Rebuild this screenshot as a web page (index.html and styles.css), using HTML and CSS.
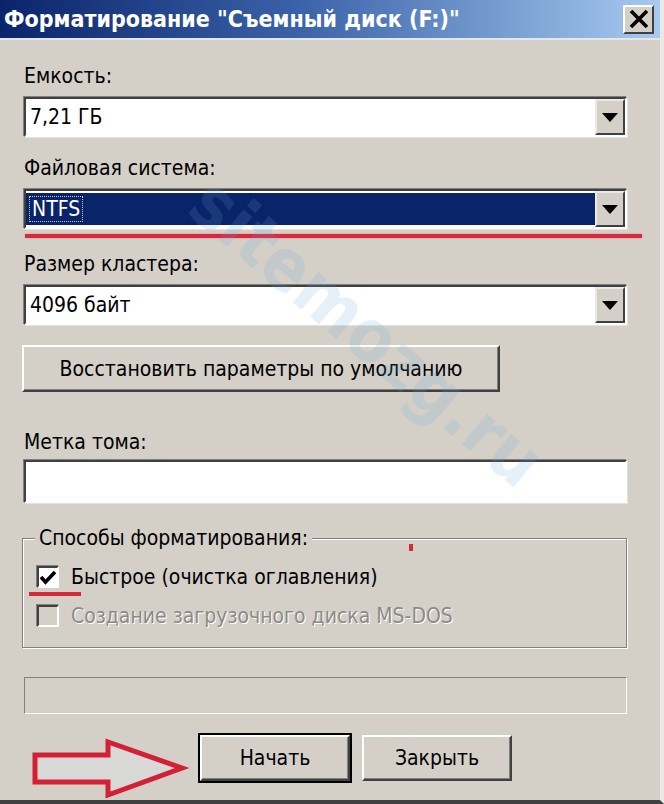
FILE: index.html
```html
<!DOCTYPE html>
<html lang="ru">
<head>
  <meta charset="UTF-8">
  <title>Форматирование</title>
  <link rel="stylesheet" href="styles.css">
</head>
<body>
  <div class="window">
    <div class="titlebar">
      <span class="title">Форматирование "Съемный диск (F:)"</span>
      <span class="close-btn">
        <svg width="22" height="20" viewBox="0 0 22 20"><path d="M3 2 L19 18 M19 2 L3 18" stroke="#000" stroke-width="3.6"/></svg>
      </span>
    </div>

    <div class="content">
      <div class="label first">Емкость:</div>
      <div class="combo">
        <span class="combo-value">7,21 ГБ</span>
        <span class="combo-btn"><span class="arrow-down"></span></span>
      </div>

      <div class="label">Файловая система:</div>
      <div class="combo selected">
        <span class="combo-value"><span class="focus">NTFS</span></span>
        <span class="combo-btn"><span class="arrow-down"></span></span>
      </div>
      <div class="red-line"></div>

      <div class="label after-line">Размер кластера:</div>
      <div class="combo">
        <span class="combo-value">4096 байт</span>
        <span class="combo-btn"><span class="arrow-down"></span></span>
      </div>

      <div class="restore-row">
        <span class="btn restore">Восстановить параметры по умолчанию</span>
      </div>

      <div class="label volume">Метка тома:</div>
      <div class="textbox"></div>

      <div class="group">
        <span class="legend">Способы форматирования:</span>
        <div class="check-row">
          <span class="checkbox"><svg width="18" height="16" viewBox="0 0 18 16"><path d="M2 8 L6.5 13 L16 3" fill="none" stroke="#000" stroke-width="3.6"/></svg></span>
          <span>Быстрое (очистка оглавления)</span>
          <span class="red-dash"></span>
        </div>
        <div class="check-row disabled">
          <span class="checkbox off"></span>
          <span>Создание загрузочного диска MS-DOS</span>
        </div>
      </div>

      <div class="progress"></div>

      <div class="actions">
        <span class="btn default">Начать</span>
        <span class="btn">Закрыть</span>
      </div>
    </div>

    <span class="red-dot"></span>
    <span class="watermark">sitemozg.ru</span>
    <svg class="red-arrow" width="170" height="70" viewBox="0 0 170 70">
      <path d="M5 17 L78 17 L78 4 L152 30 L78 57 L78 44 L5 44 Z" fill="rgba(220,225,230,0.5)" stroke="#d42035" stroke-width="5" stroke-linejoin="miter"/>
    </svg>
  </div>
</body>
</html>
```

FILE: styles.css
```css
body {
  margin: 0;
  background: #d4d0c8;
  font-family: "DejaVu Sans Condensed", "DejaVu Sans", sans-serif;
  font-size: 21px;
  color: #000;
}

.window {
  position: relative;
  width: 664px;
  height: 804px;
  box-sizing: border-box;
  background: #d4d0c8;
  border-right: 4px solid #ece9e4;
  border-bottom: 4px solid #404040;
  overflow: hidden;
}

.titlebar {
  height: 38px;
  display: flex;
  align-items: center;
  justify-content: space-between;
  padding: 0 6px 0 4px;
  background: linear-gradient(to right, #0a246a 0%, #3a62a8 45%, #a6caf0 100%);
  border-bottom: 2px solid #e6e6e6;
}

.title {
  color: #fff;
  font-weight: bold;
  font-size: 23px;
}

.close-btn {
  width: 31px;
  height: 29px;
  display: flex;
  align-items: center;
  justify-content: center;
  box-sizing: border-box;
  background: #d4d0c8;
  border: 2px solid;
  border-color: #fff #404040 #404040 #fff;
}

.content {
  display: flex;
  flex-direction: column;
  padding: 0 33px 0 24px;
}

.label {
  line-height: 24px;
  margin-top: 19px;
  margin-bottom: 9px;
}

.label.first {
  margin-top: 24px;
}

.label.after-line {
  margin-top: 14px;
}

.label.volume {
  margin-top: 38px;
  margin-bottom: 6px;
}

.combo {
  height: 40px;
  display: flex;
  box-sizing: border-box;
  background: #fff;
  border: 2px solid;
  border-color: #404040 #fff #fff #404040;
  box-shadow: -1px -1px 0 #808080, 1px 1px 0 #e4e2dd;
}

.combo-value {
  flex: 1;
  display: flex;
  align-items: center;
  padding-left: 4px;
  margin: 2px 0 2px 0;
}

.combo.selected .combo-value {
  background: #0a246a;
  color: #fff;
}

.focus {
  outline: 1px dotted #c8c8c8;
  padding: 0 2px;
}

.combo-btn {
  width: 30px;
  display: flex;
  align-items: center;
  justify-content: center;
  box-sizing: border-box;
  background: #d4d0c8;
  border: 2px solid;
  border-color: #ece9e4 #404040 #404040 #ece9e4;
}

.arrow-down {
  width: 0;
  height: 0;
  border-left: 8px solid transparent;
  border-right: 8px solid transparent;
  border-top: 9px solid #000;
}

.red-line {
  height: 4px;
  margin: 5px -15px 0 1px;
  background: #d8283c;
  box-shadow: 0 0 2px #f08090;
}

.restore-row {
  display: flex;
  margin-top: 20px;
  margin-left: -2px;
}

.btn {
  display: flex;
  align-items: center;
  justify-content: center;
  box-sizing: border-box;
  background: #d4d0c8;
  border: 2px solid;
  border-color: #fff #404040 #404040 #fff;
  box-shadow: inset -1px -1px 0 #808080;
}

.restore {
  width: 478px;
  height: 47px;
}

.textbox {
  height: 43px;
  box-sizing: border-box;
  background: #fff;
  border: 2px solid;
  border-color: #404040 #fff #fff #404040;
  box-shadow: -1px -1px 0 #808080, 1px 1px 0 #e4e2dd;
}

.group {
  position: relative;
  margin: 35px 0 0 -2px;
  height: 110px;
  box-sizing: border-box;
  border: 1px solid #808080;
  box-shadow: inset 1px 1px 0 #fff, 1px 1px 0 #fff;
  padding: 26px 0 0 14px;
  display: flex;
  flex-direction: column;
  gap: 15px;
}

.legend {
  position: absolute;
  top: -13px;
  left: 12px;
  padding: 0 4px;
  line-height: 24px;
  background: #d4d0c8;
}

.check-row {
  position: relative;
  display: flex;
  align-items: center;
  gap: 12px;
  height: 24px;
}

.checkbox {
  width: 22px;
  height: 22px;
  display: flex;
  align-items: center;
  justify-content: center;
  box-sizing: border-box;
  background: #fff;
  border: 2px solid;
  border-color: #404040 #fff #fff #404040;
  box-shadow: -1px -1px 0 #808080;
}

.checkbox.off {
  background: #d4d0c8;
}

.check-row.disabled {
  color: #8c8a86;
  text-shadow: 1px 1px 0 #fff;
}

.red-dash {
  position: absolute;
  left: -8px;
  top: 27px;
  width: 52px;
  height: 4px;
  background: #d8283c;
}

.progress {
  height: 37px;
  margin-top: 29px;
  box-sizing: border-box;
  border: 1px solid;
  border-color: #808080 #fff #fff #808080;
}

.actions {
  display: flex;
  gap: 12px;
  margin-top: 21px;
  margin-left: 176px;
}

.actions .btn {
  width: 150px;
  height: 46px;
}

.actions .btn.default {
  outline: 2px solid #000;
}

.red-dot {
  position: absolute;
  left: 409px;
  top: 544px;
  width: 4px;
  height: 7px;
  background: #d8283c;
}

.watermark {
  position: absolute;
  left: 150px;
  top: 290px;
  font-size: 72px;
  font-weight: bold;
  color: #6aa6d6;
  opacity: 0.16;
  transform: rotate(40deg);
  transform-origin: center;
}

.red-arrow {
  position: absolute;
  left: 30px;
  top: 738px;
}
```
